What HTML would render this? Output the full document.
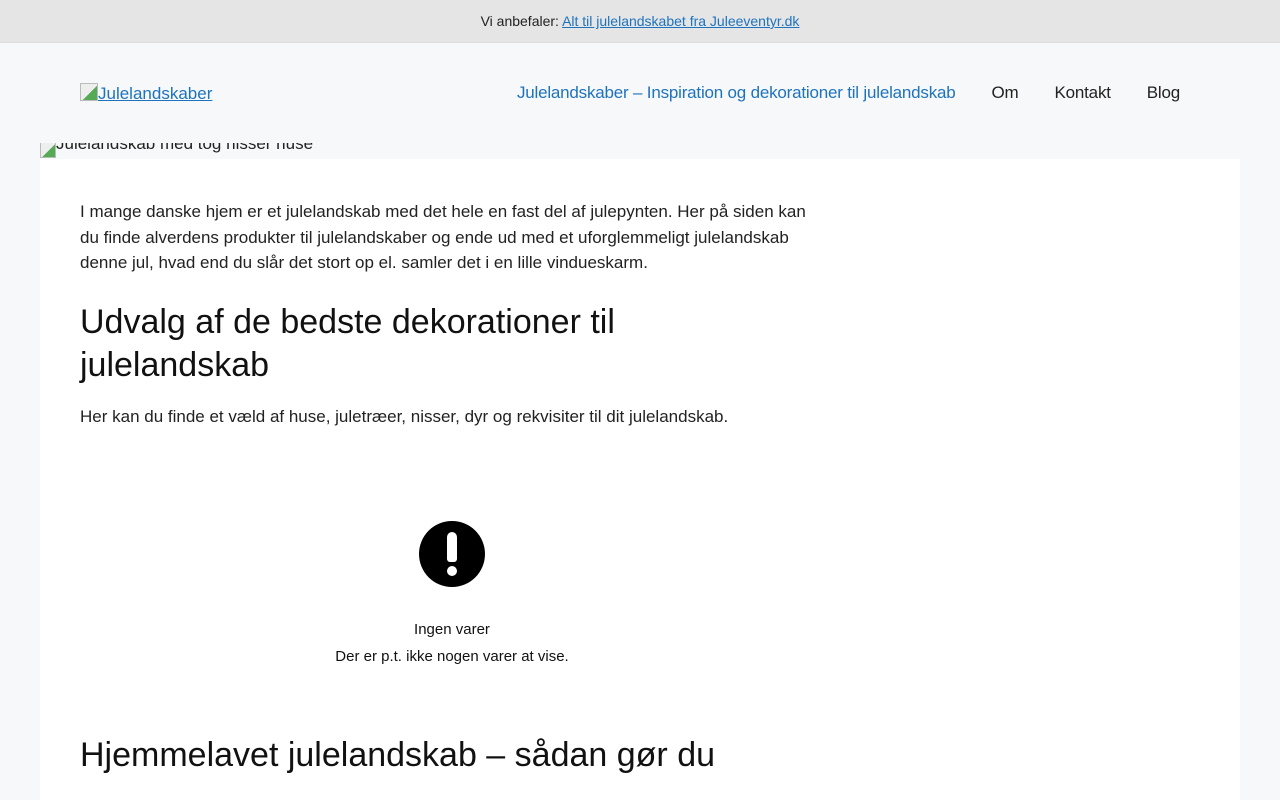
<!DOCTYPE html>
<html><head><meta charset="utf-8"><style>
body{margin:0;background:#f7f8f9;font-family:"Liberation Sans",sans-serif;color:#222;}
.top{height:42px;background:#e5e5e5;border-bottom:1px solid #ddd;text-align:center;font-size:14px;line-height:42px;color:#222}
.top a{color:#1e73be;text-decoration:underline}
.hdr{height:100px;position:relative}
.logo{position:absolute;left:80px;top:40px;font-size:17px;color:#1e73be;text-decoration:underline}
.logo i{display:inline-block;width:16px;height:16px;border:1px solid #bbb;vertical-align:-2px;background:linear-gradient(135deg,#eee 55%,#5a5 55%)}
.nav{position:absolute;right:100px;top:40px;font-size:17px;letter-spacing:-0.2px}
.nav span{margin-left:36px;color:#222}
.nav span.a{color:#1e73be;margin-left:0}
.alt{position:absolute;left:40px;top:126px;height:33px;overflow:hidden;font-size:17px;line-height:20px;color:#222}
.alt i{display:inline-block;width:14px;height:14px;border:1px solid #bbb;vertical-align:-2px;background:linear-gradient(135deg,#eee 55%,#5a5 55%)}
.altw{position:absolute;left:40px;top:143px;height:16px;overflow:hidden}
.main{position:absolute;left:40px;top:159px;width:1200px;height:641px;background:#fff;overflow:hidden}
.c{position:absolute;left:40px;width:735px}
p{margin:0;font-size:17px;line-height:25.5px}
h2{margin:0;font-weight:400;font-size:34px;line-height:43px;color:#111}
.ic{position:absolute;left:379px;top:362px;width:66px;height:66px;border-radius:50%;background:#000}
.ic:before{content:"";position:absolute;left:28px;top:11px;width:10px;height:30px;background:#fff;border-radius:5px 5px 3px 3px}
.ic:after{content:"";position:absolute;left:28px;top:45px;width:10px;height:10px;background:#fff;border-radius:50%}
.ctr{position:absolute;left:212px;width:400px;text-align:center;font-size:15px;color:#111}
</style></head><body>
<div class="top">Vi anbefaler: <a>Alt til julelandskabet fra Juleeventyr.dk</a></div>
<div class="hdr">
<div class="logo"><i></i>Julelandskaber</div>
<div class="nav"><span class="a">Julelandskaber – Inspiration og dekorationer til julelandskab</span><span>Om</span><span>Kontakt</span><span>Blog</span></div>
</div>
<div class="main">
<div class="c" style="top:40px"><p>I mange danske hjem er et julelandskab med det hele en fast del af julepynten. Her på siden kan du finde alverdens produkter til julelandskaber og ende ud med et uforglemmeligt julelandskab denne jul, hvad end du slår det stort op el. samler det i en lille vindueskarm.</p></div>
<div class="c" style="top:142px;width:600px"><h2>Udvalg af de bedste dekorationer til julelandskab</h2></div>
<div class="c" style="top:245px"><p>Her kan du finde et væld af huse, juletræer, nisser, dyr og rekvisiter til dit julelandskab.</p></div>
<div class="ic"></div>
<div class="ctr" style="top:462px">Ingen varer</div>
<div class="ctr" style="top:489px">Der er p.t. ikke nogen varer at vise.</div>
<div class="c" style="top:575px"><h2>Hjemmelavet julelandskab – sådan gør du</h2></div>
</div>
<div class="altw"><div style="margin-top:-9px;font-size:17px;line-height:20px"><i style="display:inline-block;width:14px;height:14px;border:1px solid #bbb;vertical-align:-9px;background:linear-gradient(135deg,#eee 55%,#5a5 55%)"></i>Julelandskab med tog nisser huse</div></div>
</body></html>
